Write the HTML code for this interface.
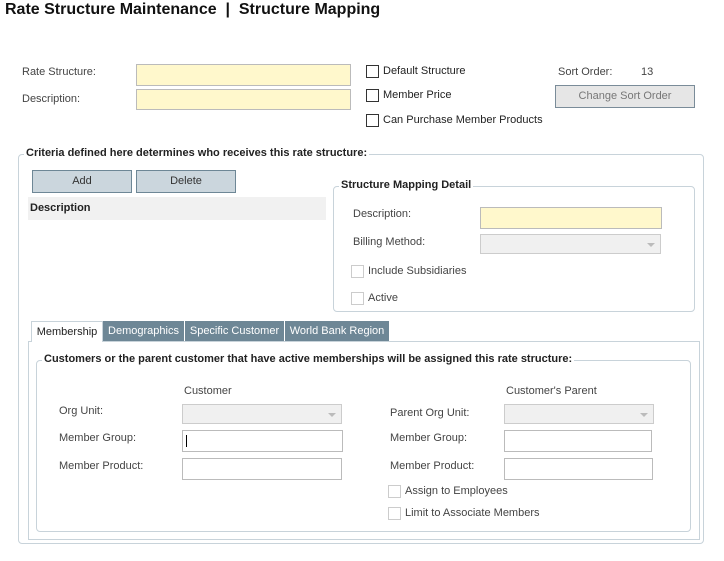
<!DOCTYPE html>
<html><head><meta charset="utf-8"><style>
*{box-sizing:border-box;margin:0;padding:0}
body{width:724px;height:561px;background:#fff;font-family:"Liberation Sans",sans-serif;font-size:11px;color:#333;position:relative;overflow:hidden}
.a{position:absolute;white-space:nowrap}
.t{font-size:16px;font-weight:bold;color:#111}
.in{position:absolute;border:1px solid #bbb;background:#fff}
.y{background:#fff8cc}
.sel{position:absolute;border:1px solid #ccc;background:#f0f0f0}
.sel:after{content:"";position:absolute;right:5px;top:8px;border-left:4px solid transparent;border-right:4px solid transparent;border-top:4px solid #bbb}
.cb{position:absolute;width:13px;height:13px;border:1px solid #333;background:#fff}
.cbd{position:absolute;width:13px;height:13px;border:1px solid #ccc;background:#fff}
.fs{position:absolute;border:1px solid #c8d3da;border-radius:4px}
.lg{position:absolute;background:#fff;font-weight:bold;padding:0 2px;color:#222}
.btn{position:absolute;background:#cbd6dd;border:1px solid #6e8796;text-align:center;line-height:20px;color:#333}
.tab{position:absolute;top:321px;height:20px;line-height:20px;text-align:center;background:#6e8796;color:#fff}
.dk{color:#444}
</style></head><body>
<div class="a t" style="left:5px;top:1px">Rate Structure Maintenance&nbsp; |&nbsp; Structure Mapping</div>

<div class="a dk" style="left:22px;top:66px">Rate Structure:</div>
<div class="a dk" style="left:22px;top:93px">Description:</div>
<div class="in y" style="left:136px;top:64px;width:215px;height:22px"></div>
<div class="in y" style="left:136px;top:89px;width:215px;height:21px"></div>

<div class="cb" style="left:366px;top:65px"></div><div class="a" style="left:383px;top:65px;color:#222">Default Structure</div>
<div class="cb" style="left:366px;top:89px"></div><div class="a" style="left:383px;top:89px;color:#222">Member Price</div>
<div class="cb" style="left:366px;top:114px"></div><div class="a" style="left:383px;top:114px;color:#222">Can Purchase Member Products</div>

<div class="a dk" style="left:558px;top:66px">Sort Order:</div>
<div class="a dk" style="left:641px;top:66px">13</div>
<div class="a" style="left:555px;top:85px;width:140px;height:23px;background:#e6e6e6;border:1px solid #7a8c99;text-align:center;line-height:21px;color:#777">Change Sort Order</div>

<div class="fs" style="left:18px;top:154px;width:686px;height:390px"></div>
<div class="lg" style="left:24px;top:147px">Criteria defined here determines who receives this rate structure:</div>

<div class="btn" style="left:32px;top:170px;width:100px;height:23px">Add</div>
<div class="btn" style="left:136px;top:170px;width:100px;height:23px">Delete</div>
<div class="a" style="left:28px;top:197px;width:298px;height:23px;background:#f1f1f1;font-weight:bold;color:#222;padding:5px 2px">Description</div>

<div class="fs" style="left:333px;top:186px;width:362px;height:126px"></div>
<div class="lg" style="left:339px;top:179px">Structure Mapping Detail</div>
<div class="a dk" style="left:353px;top:208px">Description:</div>
<div class="in y" style="left:480px;top:207px;width:182px;height:22px"></div>
<div class="a dk" style="left:353px;top:236px">Billing Method:</div>
<div class="sel" style="left:480px;top:234px;width:181px;height:20px"></div>
<div class="cbd" style="left:351px;top:265px"></div><div class="a dk" style="left:368px;top:265px">Include Subsidiaries</div>
<div class="cbd" style="left:351px;top:292px"></div><div class="a dk" style="left:368px;top:292px">Active</div>

<div class="a" style="left:28px;top:341px;width:672px;height:199px;border:1px solid #c8d3da"></div>
<div class="a" style="left:31px;top:321px;width:72px;height:21px;background:#fff;border:1px solid #c8d3da;border-bottom:none;line-height:20px;text-align:center;color:#222">Membership</div>
<div class="tab" style="left:103px;width:81px">Demographics</div>
<div class="tab" style="left:185px;width:99px">Specific Customer</div>
<div class="tab" style="left:285px;width:104px">World Bank Region</div>

<div class="fs" style="left:36px;top:360px;width:655px;height:172px"></div>
<div class="lg" style="left:42px;top:353px">Customers or the parent customer that have active memberships will be assigned this rate structure:</div>

<div class="a dk" style="left:184px;top:385px">Customer</div>
<div class="a dk" style="left:506px;top:385px">Customer's Parent</div>
<div class="a dk" style="left:59px;top:405px">Org Unit:</div>
<div class="sel" style="left:182px;top:404px;width:160px;height:20px"></div>
<div class="a dk" style="left:59px;top:432px">Member Group:</div>
<div class="in" style="left:182px;top:430px;width:161px;height:22px"><div style="position:absolute;left:3px;top:4px;width:1px;height:12px;background:#000"></div></div>
<div class="a dk" style="left:59px;top:460px">Member Product:</div>
<div class="in" style="left:182px;top:458px;width:160px;height:22px"></div>

<div class="a dk" style="left:390px;top:407px">Parent Org Unit:</div>
<div class="sel" style="left:504px;top:404px;width:150px;height:20px"></div>
<div class="a dk" style="left:390px;top:432px">Member Group:</div>
<div class="in" style="left:504px;top:430px;width:148px;height:22px"></div>
<div class="a dk" style="left:390px;top:460px">Member Product:</div>
<div class="in" style="left:504px;top:458px;width:149px;height:22px"></div>
<div class="cbd" style="left:388px;top:485px"></div><div class="a dk" style="left:405px;top:485px">Assign to Employees</div>
<div class="cbd" style="left:388px;top:507px"></div><div class="a dk" style="left:405px;top:507px">Limit to Associate Members</div>
</body></html>
